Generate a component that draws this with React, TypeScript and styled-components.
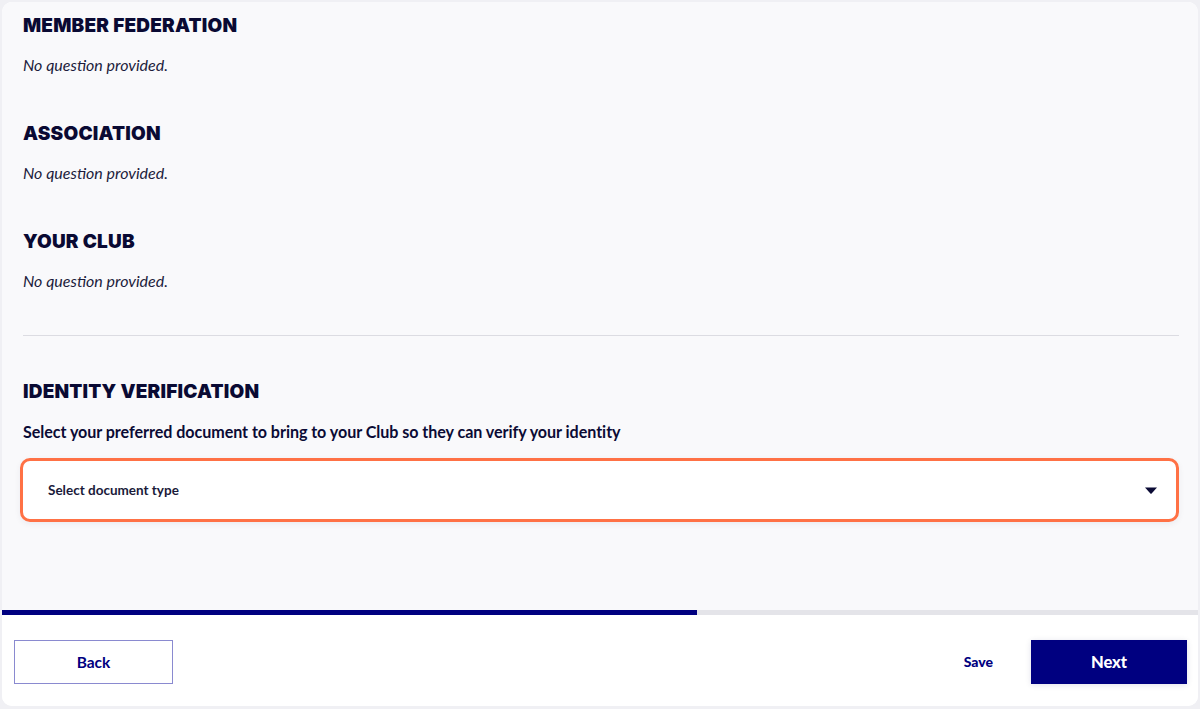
import styled, { createGlobalStyle } from "styled-components";

const GlobalStyle = createGlobalStyle`
  html, body {
    margin: 0;
    padding: 0;
    background: #f0f0f4;
    font-family: Lato, "Noto Sans", Arial, sans-serif;
    color: #0b0b35;
  }
  * {
    box-sizing: border-box;
  }
`;

const Page = styled.div`
  width: 1200px;
  height: 709px;
  padding: 2px 2px 3px 2px;
`;

const Card = styled.div`
  height: 100%;
  display: flex;
  flex-direction: column;
  border-radius: 10px;
  overflow: hidden;
  background: #ffffff;
`;

const Body = styled.div`
  flex: 1;
  background: #f9f9fb;
  padding: 11px 19px 0 21px;
  display: flex;
  flex-direction: column;
`;

const Section = styled.section`
  display: flex;
  flex-direction: column;
  height: 108px;
`;

const Heading = styled.h2`
  margin: 0;
  font-family: Inter, Lato, sans-serif;
  font-size: 19px;
  line-height: 26px;
  font-weight: 900;
  letter-spacing: 0.2px;
  text-transform: uppercase;
  color: #0a0a33;
`;

const Empty = styled.p`
  margin: 16px 0 0;
  font-size: 16px;
  line-height: 20px;
  font-style: italic;
  color: #1c1c3c;
`;

const Divider = styled.hr`
  margin: -2px 0 0 0;
  border: 0;
  border-top: 1px solid #dcdce2;
`;

const Identity = styled.section`
  display: flex;
  flex-direction: column;
  padding-top: 43px;
`;

const Prompt = styled.p`
  margin: 16px 0 0;
  font-size: 16.1px;
  line-height: 22px;
  font-weight: 700;
  letter-spacing: -0.05px;
  color: #0b0b35;
`;

const SelectBox = styled.div`
  margin: 15px 0 0 -3px;
  height: 64px;
  border: 3px solid #ff7145;
  border-radius: 10px;
  background: #ffffff;
  box-shadow: 0 2px 6px rgba(20, 20, 70, 0.06);
  display: flex;
  align-items: center;
  justify-content: space-between;
  padding: 0 19px 0 25px;
`;

const SelectLabel = styled.span`
  font-size: 13.5px;
  font-weight: 700;
  color: #1a1a3a;
`;

const Caret = styled.svg`
  width: 12px;
  height: 7px;
  fill: #0b0b35;
`;

const Progress = styled.div`
  height: 5px;
  background: #e4e4e9;
  display: flex;
`;

const ProgressFill = styled.div`
  height: 100%;
  background: #000080;
`;

const Footer = styled.div`
  height: 91px;
  display: flex;
  align-items: center;
  padding: 2px 11px 0 12px;
  background: #ffffff;
`;

const BackButton = styled.button`
  width: 159px;
  height: 44px;
  border: 1px solid #8a8ad0;
  background: #ffffff;
  color: #000080;
  font-family: inherit;
  font-size: 15.5px;
  font-weight: 700;
  cursor: pointer;
`;

const Spacer = styled.div`
  flex: 1;
`;

const SaveButton = styled.button`
  height: 44px;
  padding: 0 20px;
  margin-right: 18px;
  border: 0;
  background: transparent;
  color: #000080;
  font-family: inherit;
  font-size: 14px;
  font-weight: 900;
  cursor: pointer;
`;

const NextButton = styled.button`
  width: 156px;
  height: 44px;
  border: 0;
  background: #000080;
  color: #ffffff;
  font-family: inherit;
  font-size: 16.5px;
  font-weight: 900;
  box-shadow: 0 1px 6px rgba(0, 0, 80, 0.12);
  cursor: pointer;
`;

const sections = ["Member Federation", "Association", "Your Club"];

export default function App() {
  const progress = 58.1;
  return (
    <>
      <GlobalStyle />
      <Page>
        <Card>
          <Body>
            {sections.map((title) => (
              <Section key={title}>
                <Heading>{title}</Heading>
                <Empty>No question provided.</Empty>
              </Section>
            ))}
            <Divider />
            <Identity>
              <Heading>Identity Verification</Heading>
              <Prompt>
                Select your preferred document to bring to your Club so they can verify your identity
              </Prompt>
              <SelectBox>
                <SelectLabel>Select document type</SelectLabel>
                <Caret viewBox="0 0 12 7">
                  <path d="M0 0.5 H12 L6.6 6.4 Q6 7 5.4 6.4 Z" />
                </Caret>
              </SelectBox>
            </Identity>
          </Body>
          <Progress>
            <ProgressFill style={{ width: `${progress}%` }} />
          </Progress>
          <Footer>
            <BackButton>Back</BackButton>
            <Spacer />
            <SaveButton>Save</SaveButton>
            <NextButton>Next</NextButton>
          </Footer>
        </Card>
      </Page>
    </>
  );
}
